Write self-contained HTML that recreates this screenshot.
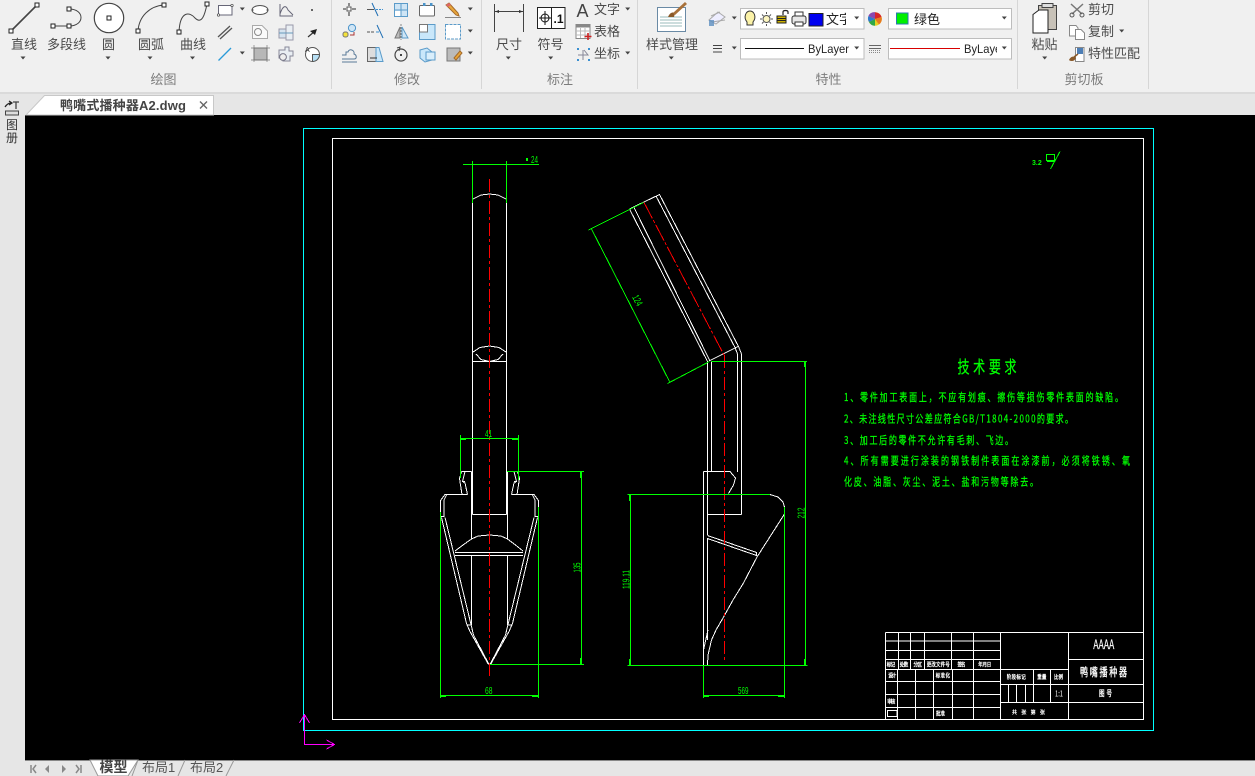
<!DOCTYPE html>
<html lang="zh">
<head>
<meta charset="utf-8">
<title>CAD</title>
<style>
html,body{margin:0;padding:0;width:1255px;height:776px;overflow:hidden;background:#f0f0f0}
svg{display:block;font-family:"Liberation Sans","Noto Sans CJK SC",sans-serif}
.l{font-size:13px;fill:#4a4a4a;text-anchor:middle}
.r{font-size:13px;fill:#4a4a4a}
.g{font-size:13px;fill:#7c7c7c;text-anchor:middle}
.k{fill:none;stroke:#444;stroke-width:1}
.gt{fill:#0f0;stroke:#0f0;stroke-width:.2;font-family:"WenQuanYi Zen Hei","Noto Sans CJK SC",sans-serif}
.dt{fill:#0f0;font-family:"Liberation Sans",sans-serif;font-size:10px}
.wt{fill:#fff;stroke:#fff;stroke-width:.25;font-size:4.5px;font-family:"WenQuanYi Zen Hei","Noto Sans CJK SC",sans-serif}
.w{fill:none;stroke:#fff;stroke-width:1}
.gl{fill:none;stroke:#0f0;stroke-width:1}
</style>
</head>
<body>
<svg width="1255" height="776" viewBox="0 0 1255 776" xmlns="http://www.w3.org/2000/svg">
<defs>
<path id="d" d="M-2.500-1.500h5L0 1.500z" fill="#444"/>
<rect id="h" x="-2" y="-2" width="4" height="4" fill="#fff" stroke="#222" stroke-width="1"/>
<clipPath id="c1"><rect x="826" y="8" width="20" height="21"/></clipPath>
<clipPath id="c2"><rect x="964" y="38" width="33" height="21"/></clipPath>
</defs>

<!-- backgrounds -->
<rect width="1255" height="92" fill="#f0f0f0"/>
<rect y="92" width="1255" height="2" fill="#dadada"/>
<rect y="94" width="1255" height="21" fill="#e6e6e6"/>
<rect y="115" width="25" height="645" fill="#e6e6e6"/>
<rect y="760" width="1255" height="16" fill="#e6e6e6"/>
<rect x="25" y="115" width="1230" height="645" fill="#000"/>
<rect x="25" y="760" width="1230" height="1" fill="#888"/>

<!-- separators -->
<g fill="#d6d6d6">
<rect x="331" y="0" width="1" height="89"/><rect x="481" y="0" width="1" height="89"/>
<rect x="637" y="0" width="1" height="89"/><rect x="1017" y="0" width="1" height="89"/>
<rect x="1148" y="0" width="1" height="89"/>
</g>

<!-- draw panel big icons -->
<path d="M11 31L37 5" stroke="#444" stroke-width="1.600"/>
<use href="#h" x="11" y="31"/><use href="#h" x="37" y="5"/>
<path d="M53 26H69M69 9C85 9 85 26 69 26" class="k"/>
<use href="#h" x="69" y="9"/><use href="#h" x="69" y="26"/><use href="#h" x="53" y="26"/>
<circle cx="109" cy="18" r="14.700" fill="#fff" stroke="#444" stroke-width="1.200"/>
<use href="#h" x="109" y="18"/>
<path d="M138 31C139 16 150 6 164 5" class="k"/>
<use href="#h" x="138" y="31"/><use href="#h" x="164" y="5"/>
<path d="M179 32C180 10 190 12 195 18C202 25 205 14 207 4" class="k"/>
<use href="#h" x="179" y="32"/><use href="#h" x="207" y="4"/>
<text x="24" y="49" class="l">直线</text>
<text x="66.500" y="49" class="l">多段线</text>
<text x="108.500" y="49" class="l">圆</text>
<text x="151" y="49" class="l">圆弧</text>
<text x="193" y="49" class="l">曲线</text>
<use href="#d" x="23" y="58"/><use href="#d" x="108" y="58"/><use href="#d" x="150" y="58"/><use href="#d" x="192.500" y="58"/>
<text x="163.500" y="84" class="g">绘图</text>

<!-- draw small icons -->
<rect x="218.500" y="5.500" width="13.500" height="9.500" fill="#fff" stroke="#667" stroke-width="1"/>
<circle cx="218.500" cy="15" r="1.200" fill="#fff" stroke="#444" stroke-width=".7"/><circle cx="232" cy="5.500" r="1.200" fill="#fff" stroke="#444" stroke-width=".7"/>
<use href="#d" x="242.300" y="9"/>
<ellipse cx="260" cy="10" rx="8" ry="4.500" fill="#fff" stroke="#555"/>
<circle cx="252.500" cy="10" r="1" fill="#555"/><circle cx="267.500" cy="10" r="1" fill="#555"/>
<path d="M280 4V16H293M280 14C283 5 286 5 288 10L293 15" fill="none" stroke="#667"/>
<rect x="311" y="9" width="2" height="2" fill="#666"/>
<path d="M218 37L230 26M220 39L232 28" stroke="#555" stroke-width="1.300" fill="none"/>
<path d="M252.500 25.500H262L267.500 31V38.500H252.500Z" fill="#fafafa" stroke="#aaa"/><circle cx="258" cy="32" r="3.500" fill="none" stroke="#888"/>
<rect x="279" y="29" width="14" height="9" fill="#d5e3ef" stroke="#99a"/><rect x="286" y="25" width="7" height="15" fill="#e9eef3" stroke="#99a"/><path d="M279 33H293" stroke="#69b"/>
<path d="M308 37L315 31" stroke="#333" stroke-width="1.200"/><path d="M317 29L310 31L315 35Z" fill="#222"/>
<path d="M218.500 60.500L231 48" stroke="#2a9ad8" stroke-width="1.300"/>
<use href="#d" x="242.300" y="53"/>
<rect x="254" y="48" width="13" height="12" fill="#b7b7b7" stroke="#666"/>
<path d="M254 45V62M267 45V62M251 48H270M251 60H270" stroke="#777" stroke-width=".7"/>
<path d="M279 50H285V47H289V51H293V56H290V61H283V58H279Z" fill="#e9eef3" stroke="#889"/><circle cx="283" cy="57" r="3.400" fill="#eee" stroke="#778"/>
<circle cx="312.500" cy="54.500" r="7" fill="#fff" stroke="#555"/><path d="M312.500 54.500H319.500A7 7 0 0 1 312.500 61.500Z" fill="#b8e0f5" stroke="#555"/>
<text x="305" y="52" font-size="7" fill="#333">A</text>

<!-- modify panel icons -->
<g fill="none" stroke="#555">
<rect x="347" y="7" width="4" height="4" fill="#fff"/>
<path d="M349 3V6M349 12V16M343 9H346M352 9H356" stroke-width="1.300"/>
<path d="M367 9.500H374" stroke="#555"/><path d="M376 9.500H383" stroke="#3b8fd0" stroke-dasharray="2 1"/><path d="M372 3L378 16" stroke="#1f6fb4"/>
<rect x="394.500" y="3.500" width="13" height="13" fill="#cfe5f5" stroke="#5b9bc9"/><path d="M401 3.500V16.500M394.500 10H407.500" stroke="#5b9bc9"/><rect x="395" y="11" width="5.500" height="5" fill="#fff" stroke="none"/>
<rect x="419.500" y="5.500" width="15" height="10.500" rx="1" fill="#fff" stroke="#666"/><rect x="423" y="3" width="2.500" height="3" fill="#4a93c9" stroke="none"/><rect x="430" y="3" width="2.500" height="3" fill="#4a93c9" stroke="none"/>
<path d="M446 5L449 3L458 13L459 16L456 15Z" fill="#e8a63a" stroke="#a46a2a"/><path d="M446 5L449 3L451 5L448 7Z" fill="#d66" stroke="none"/><path d="M445 17.500H461" stroke="#888"/>
<circle cx="352" cy="28" r="3.600" fill="#cfe5f5" stroke="#4a93c9"/><rect x="343" y="32" width="5" height="5" rx="2" fill="#f4e23a" stroke="#777"/><path d="M350 35H354V32" stroke="#a33"/>
<path d="M367 32H374" stroke="#555" stroke-dasharray="3 1"/><path d="M376 32H379" stroke="#3b8fd0"/><path d="M377 25L383 38" stroke="#1f6fb4"/>
<path d="M400 27L395 38H400Z" fill="#bbb" stroke="#777"/><path d="M402 27L408 38H402Z" fill="#cfe5f5" stroke="#5b9bc9"/><path d="M401 24V40" stroke="#888" stroke-dasharray="2 1"/>
<rect x="419.500" y="24.500" width="15.500" height="15" fill="#c9e7fa" stroke="#5b9bc9"/><rect x="419.500" y="24.500" width="8" height="7.500" fill="#fff" stroke="#777"/>
<rect x="445.500" y="24.500" width="15" height="14.500" fill="#fff" stroke="#5b9bc9" stroke-dasharray="3 1"/>
<path d="M342 59H354C357 59 357 55 354 54C355 50 349 48 348 52L346 52V55H342M342 62H357" stroke="#5a7a98"/>
<path d="M367.500 47.500H376V61.500H367.500Z" fill="#ddd" stroke="#666"/><path d="M376 47.500H379L383 61.500H376Z" fill="#c9e7fa" stroke="#5b9bc9"/><path d="M370 58H377" stroke="#333"/>
<circle cx="401" cy="55" r="6" stroke="#444" stroke-width="1.200"/><rect x="400" y="54" width="2" height="2" fill="#444" stroke="none"/><path d="M397 48L400 47L399 51" stroke="#444"/>
<path d="M420 50L427 48L432 52V60L425 62L420 58Z" fill="#c9e7fa" stroke="#5b9bc9"/><rect x="426" y="52" width="9" height="8" fill="#d9eefb" stroke="#5b9bc9"/>
<rect x="447" y="48" width="13" height="13" fill="#bbb" stroke="#777"/><path d="M454 58L460 51L462 53L456 60Z" fill="#e8a63a" stroke="#a46a2a"/>
</g>
<use href="#d" x="470.300" y="9"/><use href="#d" x="470.300" y="31"/><use href="#d" x="470.300" y="53"/>
<text x="407" y="84" class="g">修改</text>

<!-- annotation -->
<path d="M494.500 4V32M523.500 4V32M495 11.500H523" stroke="#444" fill="none"/>
<path d="M495 11.500l4-1.500v3zM523 11.500l-4-1.500v3z" fill="#333"/>
<text x="509" y="49" class="l">尺寸</text><use href="#d" x="508.300" y="58"/>
<rect x="537.500" y="7.500" width="27.500" height="21" fill="#fff" stroke="#222"/>
<path d="M551.500 8V28" stroke="#222"/>
<circle cx="545" cy="18" r="4" fill="none" stroke="#111"/><path d="M539 18H551M545 11V25" stroke="#111"/>
<text x="553.500" y="23" font-size="12" font-weight="bold" fill="#111">.1</text>
<text x="550.500" y="49" class="l">符号</text><use href="#d" x="550.700" y="58"/>
<text x="576.500" y="17" font-size="18" fill="#444">A</text>
<text x="594" y="14" class="r">文字</text><use href="#d" x="627.700" y="9"/>
<rect x="576" y="24.500" width="14" height="14" fill="#fff" stroke="#888"/><rect x="576" y="24.500" width="14" height="3" fill="#888"/>
<path d="M576 31H590M576 35H590M580.500 28V38M585 28V38" stroke="#bbb"/>
<path d="M588 33V40M584.500 36.500H591.500" stroke="#c22" stroke-width="1.600"/>
<text x="594" y="36" class="r">表格</text>
<path d="M583 50V60M578 55H588L584 50" fill="none" stroke="#889"/><rect x="577" y="48" width="2" height="2" fill="#3a8fd0"/><rect x="588" y="48" width="2" height="2" fill="#3a8fd0"/><rect x="577" y="59" width="2" height="2" fill="#3a8fd0"/><rect x="588" y="59" width="2" height="2" fill="#3a8fd0"/>
<text x="594" y="58" class="r">坐标</text><use href="#d" x="627.700" y="53"/>
<text x="560" y="84" class="g">标注</text>

<!-- style manager -->
<rect x="657.500" y="7.500" width="28" height="24" fill="#fff" stroke="#6a8aa5"/>
<path d="M660 17H682M660 20H682M660 23H682M660 26H682" stroke="#9bb" stroke-width="1"/>
<path d="M668 17C670 12 673 12 675 13L674 17Z" fill="#8a5a2a"/><path d="M673 13L685 2L687 4L675 15Z" fill="#a8713a"/>
<text x="672" y="49" class="l">样式管理</text><use href="#d" x="671.300" y="58"/>

<!-- properties -->
<path d="M709 20L718 12L725 17L716 24Z" fill="#eef" stroke="#aaa"/><path d="M711 16L720 12M712 22L725 20" stroke="#aaa"/><rect x="709" y="20" width="5" height="6" fill="#5c8fc0" opacity=".8"/>
<use href="#d" x="734.300" y="18"/>
<rect x="740.500" y="8.500" width="123.500" height="20.500" fill="#fff" stroke="#bdbdbd"/>
<path d="M747 22C743 17 746 11 750 11C754 11 757 17 753 22V25H747Z" fill="#fbf2a8" stroke="#333"/>
<circle cx="766.500" cy="19" r="3.500" fill="#fdf6c0" stroke="#555"/><path d="M766.500 12V14M766.500 24V26M760 19H762M771 19H773M762 14.500L763.500 16M771 14.500L769.500 16M762 23.500L763.500 22M771 23.500L769.500 22" stroke="#555"/>
<rect x="777" y="16" width="9" height="7" fill="#cdb100" stroke="#222"/><path d="M777 18.500H786M777 20.500H786" stroke="#222"/><path d="M783 15V12C783 10 788 10 788 12V14" fill="none" stroke="#222" stroke-width="1.200"/>
<rect x="792" y="16" width="14" height="8" rx="2" fill="#e8e8e8" stroke="#333"/><rect x="795" y="12" width="8" height="4" fill="#fff" stroke="#333"/><rect x="795" y="22" width="8" height="4" fill="#fff" stroke="#333"/>
<rect x="809" y="13.500" width="14" height="12.500" fill="#0000f0" stroke="#222"/>
<text x="826" y="24" font-size="13" fill="#222" clip-path="url(#c1)">文字</text>
<use href="#d" x="856.700" y="18"/>
<circle cx="875" cy="19" r="6.800" fill="#e8d020"/>
<path d="M875 19V12.200A6.800 6.800 0 0 1 881.600 17Z" fill="#d8242a"/><path d="M875 19L881.600 17A6.800 6.800 0 0 1 879 24.500Z" fill="#e87a20"/><path d="M875 19V25.800A6.800 6.800 0 0 1 869 22Z" fill="#30a848"/><path d="M875 19L869 22A6.800 6.800 0 0 1 868.400 16Z" fill="#2a7ad0"/><path d="M875 19L868.400 16A6.800 6.800 0 0 1 875 12.200Z" fill="#8a48b0"/>
<rect x="888.500" y="8.500" width="123" height="20.500" fill="#fff" stroke="#bdbdbd"/>
<rect x="896.500" y="13" width="11.500" height="11" fill="#00f000" stroke="#2a7ab0"/>
<text x="914" y="24" font-size="13" fill="#222">绿色</text>
<use href="#d" x="1004.300" y="18"/>
<path d="M713 45.500H722M713 48.500H722M713 52H722" stroke="#444" fill="none"/>
<use href="#d" x="734.300" y="48"/>
<rect x="740.500" y="38.500" width="123.500" height="20.500" fill="#fff" stroke="#bdbdbd"/>
<path d="M745 48.500H804" stroke="#111"/>
<text x="808" y="53" font-size="12" fill="#222" textLength="41" lengthAdjust="spacingAndGlyphs">ByLayer</text>
<use href="#d" x="856.700" y="48"/>
<path d="M869 45.500H881M869 48.500H881" stroke="#666"/><path d="M869 50.500H881M869 52.500H881" stroke="#888" stroke-dasharray="1 1"/>
<rect x="888.500" y="38.500" width="123" height="20.500" fill="#fff" stroke="#bdbdbd"/>
<path d="M890 48.500H960" stroke="#d80000"/>
<text x="964" y="53" font-size="12" fill="#222" clip-path="url(#c2)" textLength="41" lengthAdjust="spacingAndGlyphs">ByLayer</text>
<use href="#d" x="1004.300" y="48"/>
<text x="828.500" y="84" class="g">特性</text>

<!-- clipboard -->
<rect x="1038.500" y="5.500" width="18" height="24" fill="#c8c2b8" stroke="#444"/>
<rect x="1042" y="3.500" width="11" height="4" fill="#ddd" stroke="#444"/>
<path d="M1033 14.500L1039 10H1048V33H1033Z" fill="#fff" stroke="#222"/>
<text x="1044.500" y="49" class="l">粘贴</text><use href="#d" x="1044.700" y="58"/>
<path d="M1071 4L1082 14M1083 4L1072 14" stroke="#777" stroke-width="1.500"/><circle cx="1072" cy="15" r="2" fill="none" stroke="#555"/><circle cx="1082" cy="15" r="2" fill="none" stroke="#555"/>
<text x="1088" y="14" class="r">剪切</text>
<path d="M1069.500 25.500H1076L1078 28V36H1069.500Z" fill="#fff" stroke="#888"/><path d="M1075.500 29.500H1081L1084.500 33V39.500H1075.500Z" fill="#fff" stroke="#888"/>
<text x="1088" y="36" class="r">复制</text><use href="#d" x="1121.700" y="31"/>
<rect x="1075.500" y="47.500" width="8.500" height="14" fill="#fff" stroke="#888"/><rect x="1077" y="48" width="6" height="6" fill="#4d7eb5"/>
<path d="M1069 60C1071 56 1074 56 1076 58C1075 61 1071 62 1069 60Z" fill="#8a5a2a"/><path d="M1074 57L1078 54" stroke="#8a5a2a" stroke-width="1.500"/>
<text x="1088" y="58" class="r">特性匹配</text>
<text x="1084" y="84" class="g">剪切板</text>

<!-- file tab -->
<path d="M26 115L44.500 95.500H213.500V115Z" fill="#fff" stroke="#c8c8c8"/>
<text x="60" y="110" font-size="13" font-weight="bold" fill="#444" textLength="126" lengthAdjust="spacing">鸭嘴式播种器A2.dwg</text>
<path d="M200 101.500L207 108.500M207 101.500L200 108.500" stroke="#666" stroke-width="1.400"/>

<!-- left side -->
<path d="M5 107C7 104 9 103 11 103M9 101L12 103L9 105" fill="none" stroke="#222" stroke-width="1.200"/>
<path d="M13 102H19M16 102V109" stroke="#444" stroke-width="1.300"/>
<rect x="5.500" y="111" width="13" height="4" fill="#ddd" stroke="#444"/>
<text x="12" y="129" font-size="12" fill="#333" text-anchor="middle">图</text>
<text x="12" y="142" font-size="12" fill="#333" text-anchor="middle">册</text>

<!-- bottom tabs -->
<path d="M31 765V773M36 765L33 769L36 773" fill="none" stroke="#888" stroke-width="1.500"/>
<path d="M49 765L45 769L49 773Z" fill="#888"/><path d="M62 765L66 769L62 773Z" fill="#888"/>
<path d="M81 765V773M76 765L79 769L76 773" fill="none" stroke="#888" stroke-width="1.500"/>
<path d="M90 760L98 776H128L138 760Z" fill="#fff" stroke="#999"/>
<path d="M132 776L138 760M178 776L185 760M226 776L234 760" stroke="#999" fill="none"/>
<text x="99.500" y="772" font-size="14" font-weight="bold" fill="#444">模型</text>
<text x="142" y="772" font-size="13" fill="#555">布局1</text>
<text x="190" y="772" font-size="13" fill="#555">布局2</text>

<!-- drawing -->
<g shape-rendering="crispEdges">
<rect x="303.500" y="128.500" width="850" height="602" fill="none" stroke="#0ff"/>
<rect x="332.500" y="138.500" width="811" height="581" class="w"/>
<path d="M304.500 715V744.500H334M299.500 723L304.500 714.500L309.500 723M326.500 740L334.500 744.500L326.500 749" fill="none" stroke="#f0f" stroke-width="1"/>

<!-- left view -->
<g class="w">
<path d="M472.500 203V514.500M506.500 203V514.500M472.500 514.500H506.500"/>
<path d="M473 199L481 195L489.500 194L498 195L506 199"/>
<path d="M473 352L480 347.500L489.500 346L499 347.500L506 352M476 354L481 359.500L489.500 361.500L498 359.500L503 354"/>
<path d="M472.500 361.500H506.500"/>
<path d="M471.500 471.500V539.500M507.500 471.500V539.500M471.500 555.500V625M507.500 555.500V625"/>
<path d="M455 552.500H523M455 555.500H523"/>
<path d="M455 551L463 545L471.500 539L478 536L489.500 535L501 536L507.500 539L515.500 545L523 551"/>
<g id="half">
<path d="M461.500 471.500H471.500M461.500 471.500L459.500 478.500L462 494.500M465 471.500L462.500 481.500H465M462.500 481.500L465 483L467.500 494.500"/>
<path d="M467.500 494.500H445L440.500 500.500V516.500M446.500 495L444 500V516.500M440.500 516.500H444.500"/>
<path d="M441.500 517.500L466.500 623.500L470 631.500L488.500 664.500M445 517.500L471.500 626.500L473.500 635L489 664.500M467 625H471.500"/>
</g>
<use href="#half" transform="translate(979,0) scale(-1,1)"/>
</g>
<path d="M489.500 179V678" stroke="#f00" stroke-dasharray="13 3 3 3" fill="none"/>
<g class="gl">
<path d="M463 164.500H539M472.500 161V203M506.500 161V203"/>
<path d="M460.500 438.500H518.500M460.500 435V478M518.500 435V480"/>
<path d="M507 471.500H584M581.500 471.500V664.500M490 664.500H584"/>
<path d="M440.500 512V698M538.500 507V698M440.500 695.500H538.500"/>
</g>
<rect x="526" y="158" width="2" height="3" fill="#0f0"/>
<text class="dt" x="531" y="163" textLength="7" lengthAdjust="spacingAndGlyphs">24</text>
<text class="dt" x="485" y="437" textLength="7" lengthAdjust="spacingAndGlyphs">41</text>
<text class="dt" x="485" y="694" textLength="7.500" lengthAdjust="spacingAndGlyphs">68</text>
<text class="dt" transform="translate(580.500,572.500) rotate(-90)" textLength="10" lengthAdjust="spacingAndGlyphs">135</text>
<!-- dimension arrow ticks -->
<g fill="#0f0">
<rect x="441" y="695" width="5" height="2"/><rect x="532" y="695" width="6" height="2"/>
<rect x="461" y="438" width="5" height="2"/><rect x="512" y="438" width="6" height="2"/>
<rect x="580" y="472" width="2" height="6"/><rect x="580" y="658" width="2" height="6"/>
<rect x="804" y="362" width="2" height="5"/><rect x="804" y="659" width="2" height="6"/>
<rect x="629" y="495" width="2" height="6"/><rect x="629" y="659" width="2" height="6"/>
<rect x="704" y="695" width="5" height="2"/><rect x="778" y="695" width="6" height="2"/>
</g>

<!-- right view -->
<g class="w">
<path d="M629.500 209L659.500 194.500L738.500 346.500L741.500 354V514.500M656 196L735 347.500L737.500 354V472"/>
<path d="M633.500 206.500L710 361M629.500 209L707.500 361.500V471M711.500 361.500V471"/>
<path d="M709 361L738 346.500M711.500 361.500H724"/>
<path d="M703.500 471.500H730L735.500 478L733.500 485L728.500 493.500"/>
<path d="M703.500 471.500V665.500H707.500M707.500 471V535M707.500 538V640"/>
<path d="M707.500 514.500H741.500"/>
<path d="M707.500 535.500L756.500 552.500V555.500L707.500 538.500"/>
<path d="M770 494.500L778 497L783 502L784.500 507V514L757 557L743.500 583L733 600L723 618L716 630L711.500 640L708 655L707.500 665.500M703.500 650L708 630"/>
</g>
<path d="M644 202.500L724 355" stroke="#f00" stroke-dasharray="18 2 3 2" fill="none"/>
<path d="M724.500 355V662" stroke="#f00" stroke-dasharray="13 3 3 3" fill="none"/>
<g class="gl">
<path d="M588.500 230L643.500 202.500M591.500 229L669.500 381.500M667.500 383.500L709.500 361.500"/>
<path d="M711 361.500H807M805.500 361.500V665.500M627.500 494.500H770M627.500 665.500H807.500M630.500 494.500V665.500"/>
<path d="M784.500 507V698M703.500 665.500V698M703.500 695.500H784.500"/>
</g>
<text class="dt" transform="translate(632,297) rotate(63)" textLength="11" lengthAdjust="spacingAndGlyphs">124</text>
<text class="dt" x="738" y="694" textLength="10.500" lengthAdjust="spacingAndGlyphs">569</text>
<text class="dt" transform="translate(629.500,589) rotate(-90)" textLength="19" lengthAdjust="spacingAndGlyphs">119.11</text>
<text class="dt" transform="translate(804.500,518.500) rotate(-90)" textLength="11" lengthAdjust="spacingAndGlyphs">212</text>

<!-- roughness -->
<text class="dt" x="1032" y="165" style="font-size:7px;font-weight:bold">3.2</text>
<path d="M1046.500 154.500H1054.500V160.500H1046.500ZM1047 161.500H1054.500L1050.500 169L1060 151.500" class="gl"/>

<!-- title block -->
<g class="w">
<path d="M885.500 632.500H1143.500M885.500 632.500V720M1000.500 632.500V720M1068.500 632.500V720"/>
<path d="M885.500 641H1000.500M885.500 650.500H1000.500M885.500 659.500H1000.500M885.500 669.500H1068.500M885.500 681.500H1000.500M885.500 694.500H1000.500M885.500 707.500H1000.500"/>
<path d="M898.500 632.500V669.500M910.500 632.500V669.500M924.500 632.500V669.500M951.500 632.500V669.500M973.500 632.500V669.500"/>
<path d="M897.500 669.500V720M915.500 669.500V720M933.500 669.500V720M952.500 669.500V720M973.500 669.500V720"/>
<path d="M1000.500 684.500H1143.500M1000.500 702.500H1143.500M1068.500 659.500H1143.500"/>
<path d="M1033.500 669.500V702.500M1050.500 669.500V702.500M1008.500 684.500V702.500M1016.500 684.500V702.500M1025.500 684.500V702.500"/>
<rect x="887.500" y="710.500" width="9.500" height="6"/>
</g>
</g>
<g>
<text class="wt" transform="translate(886.700,666.300) scale(1,1.300)" textLength="8.500">标记</text>
<text class="wt" transform="translate(899.700,666.300) scale(1,1.300)" textLength="8.500">处数</text>
<text class="wt" transform="translate(913.500,666.300) scale(1,1.300)" textLength="8.500">分区</text>
<text class="wt" transform="translate(926.800,666.300) scale(1,1.300)" textLength="23">更改文件号</text>
<text class="wt" transform="translate(957.500,666.300) scale(1,1.300)" textLength="8">签名</text>
<text class="wt" transform="translate(978.300,666.300) scale(1,1.300)" textLength="13">年月日</text>
<text class="wt" transform="translate(888.300,677.500) scale(1,1.300)" textLength="8">设计</text>
<text class="wt" transform="translate(935.700,677.500) scale(1,1.300)" textLength="14.300">标准化</text>
<text class="wt" transform="translate(887.300,703.500) scale(1,1.300)" textLength="8">审核</text>
<text class="wt" transform="translate(936,715.700) scale(1,1.300)" textLength="9">批准</text>
<text class="wt" transform="translate(1006.700,679) scale(1,1.300)" textLength="19">阶段标记</text>
<text class="wt" transform="translate(1037.300,679) scale(1,1.300)" textLength="9">重量</text>
<text class="wt" transform="translate(1054,679) scale(1,1.300)" textLength="9">比例</text>
<text class="wt" x="1055" y="696.500" style="font-size:8px;stroke-width:0" textLength="8" lengthAdjust="spacingAndGlyphs">1:1</text>
<text class="wt" x="1012" y="714" style="font-size:5px" textLength="33">共张第张</text>
<text class="wt" transform="translate(1093.300,649) scale(1,1.400)" style="font-size:9px;stroke-width:.1" textLength="21" lengthAdjust="spacingAndGlyphs">AAAA</text>
<text class="wt" transform="translate(1080,676) scale(1,1.450)" style="font-size:8px" textLength="47">鸭嘴播种器</text>
<text class="wt" transform="translate(1099,696) scale(1,1.400)" style="font-size:5.500px" textLength="13">图号</text>
</g>

<!-- tech notes -->
<text class="gt" transform="translate(957.500,373) scale(1,1.400)" font-size="12" textLength="59">技术要求</text>
<g font-size="8">
<text class="gt" transform="translate(844,400.800) scale(1,1.350)" textLength="279">1、零件加工表面上，不应有划痕、擦伤等损伤零件表面的缺陷。</text>
<text class="gt" transform="translate(844,422.300) scale(1,1.350)" textLength="229">2、未注线性尺寸公差应符合GB/T1804-2000的要求。</text>
<text class="gt" transform="translate(844,443.800) scale(1,1.350)" textLength="169">3、加工后的零件不允许有毛刺、飞边。</text>
<text class="gt" transform="translate(844,464.300) scale(1,1.350)" textLength="286">4、所有需要进行涂装的钢铁制件表面在涂漆前，必须将铁锈、氧</text>
<text class="gt" transform="translate(844,485.300) scale(1,1.350)" textLength="194">化皮、油脂、灰尘、泥土、盐和污物等除去。</text>
</g>
</svg>
</body>
</html>
